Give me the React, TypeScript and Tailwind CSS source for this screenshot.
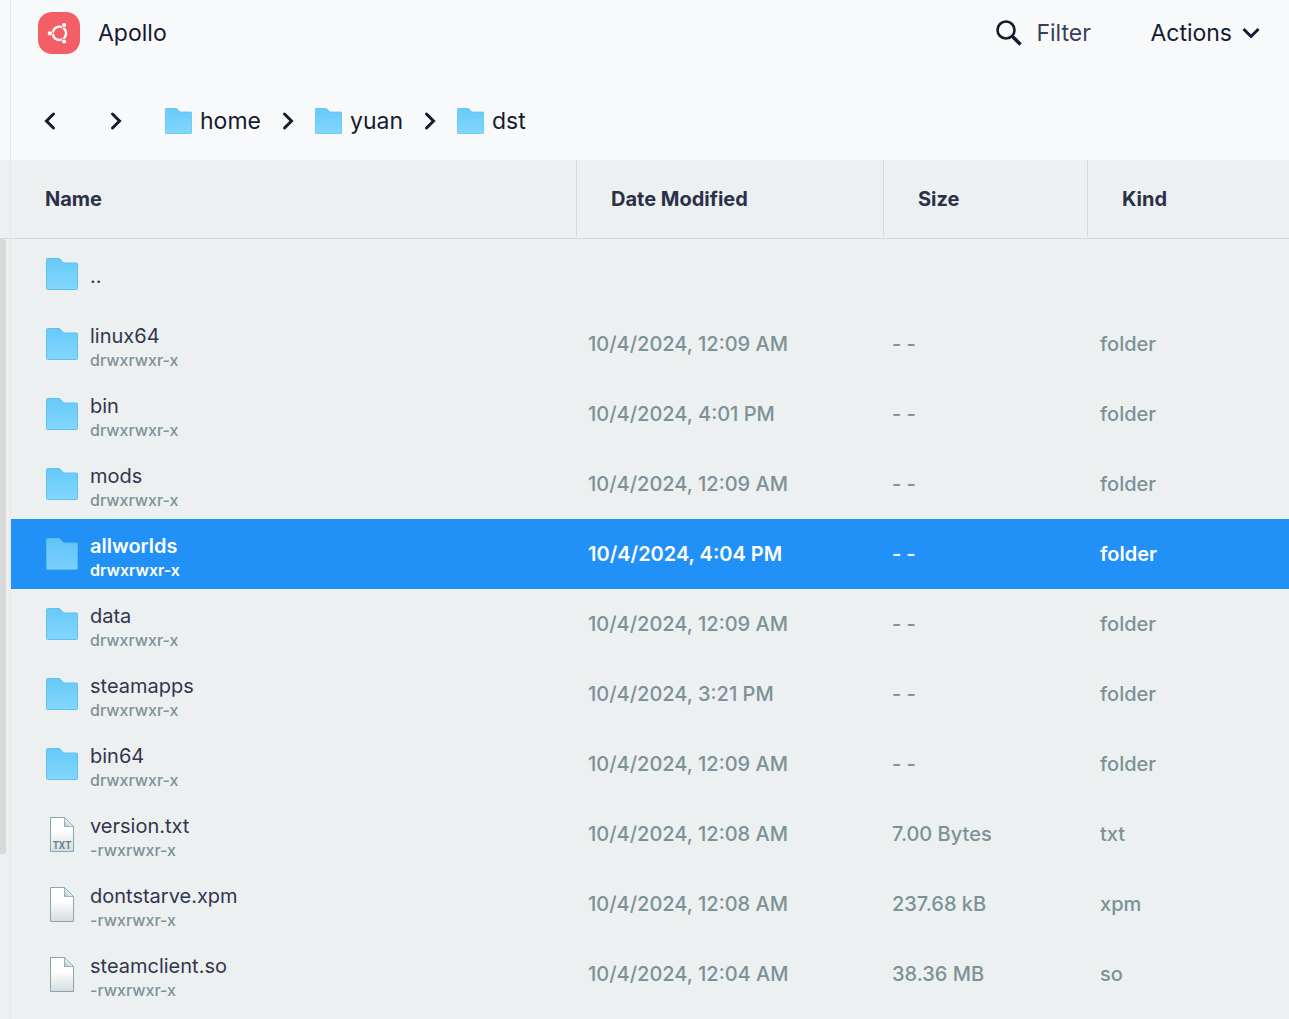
import { useId } from "react";

type Entry = {
  name: string;
  mode?: string;
  modified?: string;
  size?: string;
  kind?: string;
  icon: "folder" | "file";
  label?: string;
  selected?: boolean;
};

const entries: Entry[] = [
  { name: "..", icon: "folder" },
  { name: "linux64", mode: "drwxrwxr-x", modified: "10/4/2024, 12:09 AM", size: "- -", kind: "folder", icon: "folder" },
  { name: "bin", mode: "drwxrwxr-x", modified: "10/4/2024, 4:01 PM", size: "- -", kind: "folder", icon: "folder" },
  { name: "mods", mode: "drwxrwxr-x", modified: "10/4/2024, 12:09 AM", size: "- -", kind: "folder", icon: "folder" },
  { name: "allworlds", mode: "drwxrwxr-x", modified: "10/4/2024, 4:04 PM", size: "- -", kind: "folder", icon: "folder", selected: true },
  { name: "data", mode: "drwxrwxr-x", modified: "10/4/2024, 12:09 AM", size: "- -", kind: "folder", icon: "folder" },
  { name: "steamapps", mode: "drwxrwxr-x", modified: "10/4/2024, 3:21 PM", size: "- -", kind: "folder", icon: "folder" },
  { name: "bin64", mode: "drwxrwxr-x", modified: "10/4/2024, 12:09 AM", size: "- -", kind: "folder", icon: "folder" },
  { name: "version.txt", mode: "-rwxrwxr-x", modified: "10/4/2024, 12:08 AM", size: "7.00 Bytes", kind: "txt", icon: "file", label: "TXT" },
  { name: "dontstarve.xpm", mode: "-rwxrwxr-x", modified: "10/4/2024, 12:08 AM", size: "237.68 kB", kind: "xpm", icon: "file" },
  { name: "steamclient.so", mode: "-rwxrwxr-x", modified: "10/4/2024, 12:04 AM", size: "38.36 MB", kind: "so", icon: "file" },
];

const crumbs = ["home", "yuan", "dst"];
const columns = ["Name", "Date Modified", "Size", "Kind"];

function FolderIcon({ className }: { className: string }) {
  const id = useId();
  return (
    <svg viewBox="0 0 32 32" preserveAspectRatio="none" className={className} aria-hidden="true">
      <defs>
        <linearGradient id={id} x1="0" y1="0" x2="0" y2="1">
          <stop offset="0" stopColor="#67c9f8" />
          <stop offset="1" stopColor="#83d7fe" />
        </linearGradient>
      </defs>
      <path
        d="M1.500 .5H13Q13.600 .5 14.200 1.200L17 4.300Q17.700 5 18.500 5H30.500Q31.500 5 31.500 6V30.500Q31.500 31.500 30.500 31.500H1.500Q.5 31.500 .5 30.500V1.500Q.5 .5 1.500 .5Z"
        fill={`url(#${id})`}
        stroke="#5dc2ef"
      />
    </svg>
  );
}

function FileIcon({ label }: { label?: string }) {
  const page = useId();
  const fold = useId();
  return (
    <svg viewBox="0 0 24 35" className="h-[35px] w-6" aria-hidden="true">
      <defs>
        <linearGradient id={page} x1="0" y1="0" x2="0" y2="1">
          <stop offset="0.4" stopColor="#fefefe" />
          <stop offset="1" stopColor="#d5dde0" />
        </linearGradient>
        <linearGradient id={fold} x1="0" y1="1" x2="1" y2="0">
          <stop offset="0" stopColor="#9fb6c2" />
          <stop offset="0.5" stopColor="#f4f8fa" />
        </linearGradient>
      </defs>
      <path d="M.5 .5H14.500L23.500 9.500V34.500H.5Z" fill={`url(#${page})`} stroke="#8ba4ae" />
      <path d="M14.500 .5V9.500H23.500Z" fill={`url(#${fold})`} stroke="#8ba4ae" strokeWidth=".8" />
      {label && (
        <text x="12" y="32" textAnchor="middle" fontSize="10" fontWeight="600" fill="#668089" fontFamily="Roboto, sans-serif">
          {label}
        </text>
      )}
    </svg>
  );
}

function Chevron({ left = false }: { left?: boolean }) {
  return (
    <svg viewBox="0 0 12 20" className="h-5 w-3 shrink-0" fill="none" stroke="#161a30" strokeWidth="3" strokeLinecap="round" strokeLinejoin="miter" aria-hidden="true">
      <path d={left ? "M9.500 3L2.500 10L9.500 17" : "M2.500 3L9.500 10L2.500 17"} />
    </svg>
  );
}

function UbuntuLogo() {
  return (
    <svg viewBox="0 0 42 42" className="size-[42px] shrink-0" aria-hidden="true">
      <rect width="42" height="42" rx="14" fill="#f45f65" />
      <circle cx="21.400" cy="21.300" r="6.700" fill="none" stroke="#fff" strokeWidth="2.400" />
      <g stroke="#f45f65" strokeWidth=".8">
        <path d="M21.400 21.300H12M21.400 21.300L26.400 12.600M21.400 21.300L26.400 30" />
      </g>
      <g fill="#f45f65">
        <circle cx="11.900" cy="21.300" r="2.700" />
        <circle cx="26.100" cy="13.100" r="2.700" />
        <circle cx="26.100" cy="29.500" r="2.700" />
      </g>
      <g fill="#fff">
        <circle cx="11.900" cy="21.300" r="2.100" />
        <circle cx="26.100" cy="13.100" r="2.100" />
        <circle cx="26.100" cy="29.500" r="2.100" />
      </g>
    </svg>
  );
}

export default function App() {
  return (
    <div className="flex min-h-screen bg-[#ecf0f1] font-['Inter',sans-serif] text-[#161a30]">
      <aside className="flex w-[11px] shrink-0 flex-col border-r border-[#e4e8eb]">
        <div className="h-40 bg-[#f8f9fb]" />
        <div className="h-[79px] border-b border-[#d3dadd]" />
        <div className="h-[615px] w-1.5 rounded-r-[3px] bg-[#d8d8d8]" />
      </aside>

      <main className="min-w-0 flex-1">
        <header className="flex flex-col bg-[#f8f9fb] text-[23px] leading-8">
          <div className="flex h-[66px] items-center pr-[29px] pl-[27px]">
            <UbuntuLogo />
            <h1 className="ml-[18px]">Apollo</h1>
            <label className="ml-auto flex items-center">
              <svg viewBox="0 0 26 26" className="size-[26px]" fill="none" stroke="#161a30" aria-hidden="true">
                <circle cx="10" cy="10" r="8.500" strokeWidth="2.600" />
                <path d="M15.500 15.500L17.500 17.500" strokeWidth="2.600" />
                <path d="M17 17L24.500 24.500" strokeWidth="3.400" />
              </svg>
              <input
                type="text"
                placeholder="Filter"
                aria-label="Filter"
                className="ml-3.5 w-[90px] bg-transparent outline-none placeholder:text-[#3a3f58]"
              />
            </label>
            <button type="button" className="ml-6 flex items-center gap-2.5">
              Actions
              <svg viewBox="0 0 18 12" className="h-3 w-[18px]" fill="none" stroke="#161a30" strokeWidth="3" aria-hidden="true">
                <path d="M1.500 2L9 9.500L16.500 2" />
              </svg>
            </button>
          </div>

          <div className="flex h-[94px] items-center pt-4 pl-[33px]">
            <button type="button" aria-label="Back">
              <Chevron left />
            </button>
            <button type="button" aria-label="Forward" className="ml-[54px]">
              <Chevron />
            </button>
            <nav aria-label="Path" className="ml-[43px] flex items-center">
              {crumbs.map((crumb, i) => (
                <div key={crumb} className="flex items-center">
                  {i > 0 && (
                    <span className="mx-[21px] flex">
                      <Chevron />
                    </span>
                  )}
                  <a href="#" className="flex items-center gap-2">
                    <FolderIcon className="h-[26px] w-[27px]" />
                    {crumb}
                  </a>
                </div>
              ))}
            </nav>
          </div>
        </header>

        <table className="w-full table-fixed border-separate border-spacing-0 text-left text-xl leading-6">
          <colgroup>
            <col />
            <col className="w-[307px]" />
            <col className="w-[204px]" />
            <col className="w-[201px]" />
          </colgroup>
          <thead>
            <tr>
              {columns.map((column, i) => (
                <th key={column} scope="col" className="h-[79px] border-b border-[#d3dadd] p-0 pb-px text-[#2b3049]">
                  <div className={i < 3 ? "flex h-[77px] items-center border-r border-[#d3dadd] pl-[34px]" : "flex h-[77px] items-center pl-[34px]"}>
                    {column}
                  </div>
                </th>
              ))}
            </tr>
          </thead>
          <tbody>
            {entries.map((entry) => (
              <tr
                key={entry.name}
                aria-selected={entry.selected}
                className={entry.selected ? "h-[70px] bg-[#2191f8] font-semibold text-white" : "h-[70px] font-medium text-[#7d9197]"}
              >
                <td className="py-0 pr-4 pl-[35px]">
                  <div className="flex items-center gap-3">
                    <span className="flex w-8 shrink-0 justify-center">
                      {entry.icon === "folder" ? (
                        <FolderIcon className={entry.selected ? "size-8 opacity-90" : "size-8"} />
                      ) : (
                        <FileIcon label={entry.label} />
                      )}
                    </span>
                    <div className={entry.mode ? "pt-2" : "pt-1"}>
                      <div className={entry.selected ? "" : "font-normal text-[#33354f]"}>{entry.name}</div>
                      {entry.mode && <div className="text-base leading-6">{entry.mode}</div>}
                    </div>
                  </div>
                </td>
                <td className="p-0 pl-[11px]">{entry.modified}</td>
                <td className="p-0 pl-2">{entry.size}</td>
                <td className="p-0 pl-3">{entry.kind}</td>
              </tr>
            ))}
          </tbody>
        </table>
      </main>
    </div>
  );
}
